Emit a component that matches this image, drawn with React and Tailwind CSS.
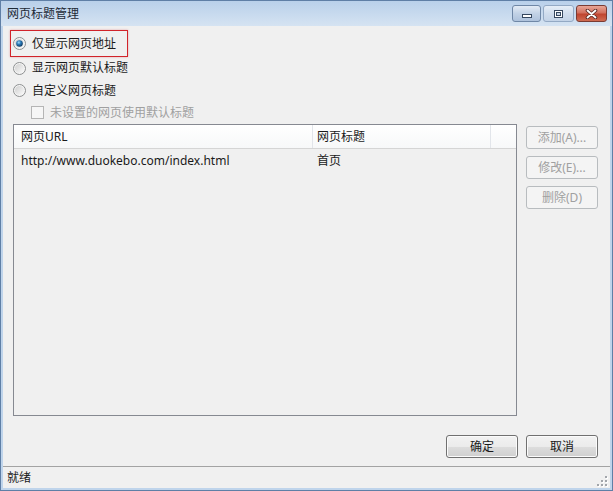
import React from "react";

function Radio({ checked, id }) {
  return (
    <svg width="13" height="13" viewBox="0 0 13 13" className="shrink-0">
      <defs>
        <linearGradient id={`rg${id}`} x1="0" y1="0" x2="1" y2="1">
          <stop offset="0" stopColor="#cfcfcf" />
          <stop offset="1" stopColor="#fbfbfb" />
        </linearGradient>
        <radialGradient id={`rd${id}`} cx="0.4" cy="0.35" r="0.65">
          <stop offset="0" stopColor="#a6dcf8" />
          <stop offset="0.45" stopColor="#2b7cba" />
          <stop offset="1" stopColor="#0f3a63" />
        </radialGradient>
      </defs>
      <circle cx="6.5" cy="6.5" r="6" fill="#f5f5f5" stroke="#8d8f90" />
      <circle cx="6.5" cy="6.5" r="4.6" fill={`url(#rg${id})`} />
      {checked && <circle cx="6.5" cy="6.5" r="3.3" fill={`url(#rd${id})`} />}
    </svg>
  );
}

function Btn({ children, disabled }) {
  return disabled ? (
    <div className="h-[23px] w-[72px] flex items-center justify-center rounded-[3px] border border-[#b8bcbf] bg-[#f4f4f4] text-[#a0a0a0]">
      {children}
    </div>
  ) : (
    <div className="h-[23px] w-[72px] flex items-center justify-center rounded-[3px] border border-[#707070] bg-[linear-gradient(#f2f2f2,#ebebeb_50%,#dddddd_50%,#cfcfcf)] shadow-[inset_0_0_0_1px_#fbfbfb] text-[#1a1a1a]">
      {children}
    </div>
  );
}

export default function App() {
  return (
    <div className="w-[613px] h-[491px] flex flex-col bg-[#bfd4eb] border border-[#5f7fa6] text-[12px] leading-none text-[#1a1a1a] font-['Noto_Sans','Noto_Sans_CJK_SC',sans-serif] overflow-hidden">
      {/* title bar */}
      <div className="h-[25px] shrink-0 flex bg-[linear-gradient(#b9d0ea,#d5e3f2)]">
        <div className="flex items-center pl-[6px] h-full text-[#1e2a36]">网页标题管理</div>
        <div className="ml-auto mt-[4px] mr-[5px] flex h-[17px] gap-[2px]">
          <div className="w-[29px] h-full rounded-[3px] border border-[#6f87a6] bg-[linear-gradient(#e3ebf5,#c2d2e6_50%,#aec2dc)] flex items-end justify-center pb-[3px]">
            <svg width="10" height="4" viewBox="0 0 10 4">
              <rect x="0.5" y="0.5" width="9" height="3" fill="#ffffff" stroke="#35475f" />
            </svg>
          </div>
          <div className="w-[31px] h-full rounded-[3px] border border-[#93a9c4] bg-[linear-gradient(#e6eef7,#d0dded_50%,#c3d3e7)] flex items-center justify-center">
            <svg width="9" height="8" viewBox="0 0 9 8">
              <rect x="0.5" y="0.5" width="8" height="7" fill="#ffffff" stroke="#35475f" />
              <rect x="2.5" y="2.5" width="4" height="3" fill="#c7d5e7" stroke="#35475f" />
            </svg>
          </div>
          <div className="w-[31px] h-full rounded-[3px] border border-[#7a3b33] bg-[linear-gradient(#e8a596,#d2705e_45%,#c0452f_55%,#cf6b52)] flex items-center justify-center">
            <svg width="13" height="10" viewBox="0 0 13 10">
              <path d="M2.5 1.5 L10.5 8.5 M10.5 1.5 L2.5 8.5" stroke="#5a2a24" strokeWidth="3.6" strokeLinecap="round" />
              <path d="M2.5 1.5 L10.5 8.5 M10.5 1.5 L2.5 8.5" stroke="#ffffff" strokeWidth="1.8" strokeLinecap="round" />
            </svg>
          </div>
        </div>
      </div>

      {/* client */}
      <div className="flex-1 flex flex-col mx-[2px] mb-[2px] bg-[#f0f0f0]">
        <div className="pt-[4px] pl-[7px]">
          <div className="inline-flex h-[27px] items-center gap-[6px] border border-[#d1232a] shadow-[0_0_2px_rgba(210,30,40,0.35)] pl-[2px] pr-[11px]">
            <Radio checked id="a" />
            <span>仅显示网页地址</span>
          </div>
        </div>
        <div className="h-[22px] flex items-center gap-[6px] pl-[10px]">
          <Radio id="b" />
          <span>显示网页默认标题</span>
        </div>
        <div className="h-[23px] flex items-center gap-[6px] pl-[10px]">
          <Radio id="c" />
          <span>自定义网页标题</span>
        </div>
        <div className="h-[21px] flex items-center gap-[6px] pl-[28px]">
          <div className="w-[13px] h-[13px] border border-[#b5b5b5] bg-[#f6f6f6]" />
          <span className="text-[#a0a0a0]">未设置的网页使用默认标题</span>
        </div>

        {/* list + side buttons */}
        <div className="mt-[1px] ml-[10px] h-[292px] flex">
          <div className="w-[504px] h-full border border-[#868991] bg-[#f0f0f0] flex flex-col">
            <div className="h-[24px] flex border-b border-[#d5d5d5] bg-[linear-gradient(#ffffff,#f7f8f9)]">
              <div className="w-[299px] flex items-center pl-[7px] border-r border-[#e2e5ea]">网页URL</div>
              <div className="w-[178px] flex items-center pl-[4px] border-r border-[#e2e5ea]">网页标题</div>
              <div className="flex-1" />
            </div>
            <div className="h-[22px] mt-[1px] flex">
              <div className="w-[299px] flex items-center pl-[7px]">http://www.duokebo.com/index.html</div>
              <div className="flex items-center pl-[4px]">首页</div>
            </div>
          </div>
          <div className="ml-[9px] pt-[2px] flex flex-col gap-[7px]">
            <Btn disabled>添加(A)...</Btn>
            <Btn disabled>修改(E)...</Btn>
            <Btn disabled>删除(D)</Btn>
          </div>
        </div>

        <div className="mt-[19px] flex justify-end gap-[8px] pr-[12px]">
          <Btn>确定</Btn>
          <Btn>取消</Btn>
        </div>

        {/* status bar */}
        <div className="mt-auto h-[22px] flex border-t border-[#a3a3a3] bg-[#f0f0f0]">
          <div className="flex items-center pl-[4px]">就绪</div>
          <div className="ml-auto self-end mr-[2px] mb-[1px]">
            <svg width="12" height="12" viewBox="0 0 12 12">
              <g fill="#ffffff">
                <rect x="10" y="2" width="2" height="2" />
                <rect x="10" y="6" width="2" height="2" />
                <rect x="6" y="6" width="2" height="2" />
                <rect x="10" y="10" width="2" height="2" />
                <rect x="6" y="10" width="2" height="2" />
                <rect x="2" y="10" width="2" height="2" />
              </g>
              <g fill="#a2a6ab">
                <rect x="9" y="1" width="2" height="2" />
                <rect x="9" y="5" width="2" height="2" />
                <rect x="5" y="5" width="2" height="2" />
                <rect x="9" y="9" width="2" height="2" />
                <rect x="5" y="9" width="2" height="2" />
                <rect x="1" y="9" width="2" height="2" />
              </g>
            </svg>
          </div>
        </div>
      </div>
    </div>
  );
}
